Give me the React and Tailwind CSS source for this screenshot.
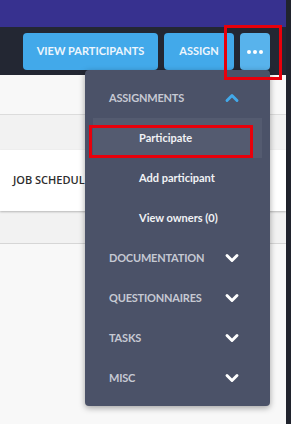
import { ChevronUp, ChevronDown } from 'lucide-react'

const sections = [
  { label: 'DOCUMENTATION' },
  { label: 'QUESTIONNAIRES' },
  { label: 'TASKS' },
  { label: 'MISC' }
]

const SectionHeader = ({ label, open }) => (
  <div className="h-10 flex items-center justify-between pl-6 pr-[28px]">
    <span className="text-[11px] font-bold text-[#c6c9d3] tracking-[-0.2px]">{label}</span>
    {open ? (
      <ChevronUp size={20} strokeWidth={3.5} className="text-[#42a9ea]" />
    ) : (
      <ChevronDown size={20} strokeWidth={3.5} className="text-white" />
    )}
  </div>
)

const SubItem = ({ label, active }) => (
  <div
    className={`h-10 mx-2 flex items-center pl-[46px] text-[11px] font-bold text-[#f1f2f5] ${
      active ? 'bg-[#545b70]' : ''
    }`}
  >
    {label}
  </div>
)

export default function App() {
  return (
    <div className="relative w-[291px] h-[424px] overflow-hidden flex font-['Lato','Open_Sans',sans-serif]">
      <div className="flex-1 flex flex-col min-w-0">
        <div className="h-[27px] bg-[#37318f]" />
        <div className="h-[48px] bg-[#232733] flex items-start justify-end gap-[6px] pt-[6px] pr-[16px]">
          <button className="h-[37px] w-[135px] rounded-[4px] bg-[#42a9ea] text-[11px] font-bold text-[#eef6fd]">
            VIEW PARTICIPANTS
          </button>
          <button className="h-[37px] w-[70px] rounded-[4px] bg-[#42a9ea] text-[11px] font-bold text-[#eef6fd]">
            ASSIGN
          </button>
          <button className="h-[37px] w-[30px] rounded-[4px] bg-[#58b3ec] flex items-center justify-center gap-[2px]">
            <span className="w-[4px] h-[4px] rounded-full bg-white" />
            <span className="w-[4px] h-[4px] rounded-full bg-white" />
            <span className="w-[4px] h-[4px] rounded-full bg-white" />
          </button>
        </div>
        <div className="flex-1 flex flex-col bg-[#f8f8f8]">
          <div className="h-[40px] border-b border-[#dcdcdc]" />
          <div className="h-[35px] bg-[#f2f2f2]" />
          <div className="h-[61px] bg-white shadow-[0_1px_2px_rgba(0,0,0,0.25)] flex items-center pl-[13px] relative">
            <span className="text-[11px] font-semibold text-[#2d2d2d] font-['Open_Sans',sans-serif] whitespace-nowrap">
              JOB SCHEDULING
            </span>
          </div>
          <div className="h-[33px] bg-[#f2f2f2] border-b border-[#d6d6d6]" />
          <div className="flex-1" />
        </div>
      </div>
      <div className="w-[5px] bg-[#20232d]" />

      <div className="absolute left-[85px] top-[70px] w-[185px] h-[336px] rounded-[4px] bg-[#4b5268] py-2 shadow-[0_2px_6px_rgba(0,0,0,0.35)]">
        <SectionHeader label="ASSIGNMENTS" open />
        <SubItem label="Participate" active />
        <SubItem label="Add participant" />
        <SubItem label="View owners (0)" />
        {sections.map((s) => (
          <SectionHeader key={s.label} label={s.label} />
        ))}
      </div>

      <div className="absolute left-[224px] top-[25px] w-[58px] h-[55px] border-[3px] border-[#e8000b]" />
      <div className="absolute left-[89px] top-[125px] w-[164px] h-[33px] border-[3px] border-[#e8000b]" />
    </div>
  )
}
